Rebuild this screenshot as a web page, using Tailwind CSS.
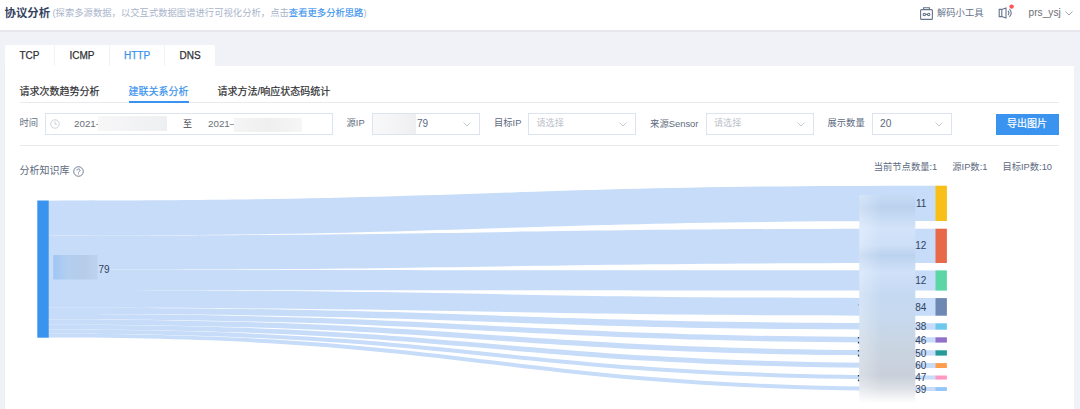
<!DOCTYPE html>
<html lang="zh-CN">
<head>
<meta charset="utf-8">
<title>协议分析</title>
<script src="https://cdn.jsdelivr.net/npm/@tailwindcss/browser@4"></script>
</head>
<body class="w-[1080px] h-[409px] overflow-hidden bg-[#f1f2f7] font-['Liberation_Sans','Noto_Sans_CJK_SC',sans-serif] text-[9.3px] leading-none text-[#5d6a80] flex flex-col whitespace-nowrap">
<header class="h-[32px] shrink-0 bg-white border-b-2 border-[#e6e8ed] flex items-center pl-[4.5px] pr-[7px] pb-[3px]">
  <h1 class="text-[11.4px] font-bold text-[#33435f] w-[48px]">协议分析</h1>
  <p class="text-[9.33px] text-[#a9b4cb] pt-px">(探索多源数据，以交互式数据图谱进行可视化分析，点击<a class="text-[#3a93ee] [-webkit-text-stroke:0.15px]">查看更多分析思路</a>)</p>
  <div class="ml-auto flex items-center">
    <svg class="w-[13px] h-[13px]" viewBox="0 0 13 13" fill="none" stroke="#66738c" stroke-width="1.1"><rect x=".6" y="2.6" width="11.8" height="9.8" rx="1"/><path d="M3.6 2.4V.7h5.8v1.7M5.6 7.4h1.8"/><circle cx="4.3" cy="7.4" r="1.2"/><circle cx="8.7" cy="7.4" r="1.2"/></svg>
    <span class="ml-[4px] w-[46px] text-[9.3px] text-[#66738c] pt-px">解码小工具</span>
    <svg class="ml-[15px] w-[16px] h-[17px] -mt-[3px]" viewBox="0 0 16 17" fill="none" stroke="#66738c" stroke-width="1.1"><path d="M3.8 5.4H1.2v7.2h2.6M3.8 5.4v7.2M3.8 5.4 8 4v10l-4.2-1.4M10 7c1.2 1.1 1.2 3 0 4.1M11.4 5.2c2.4 2.1 2.4 5.6 0 7.7"/><circle cx="13.6" cy="2.6" r="2.2" fill="#fb5358" stroke="none"/></svg>
    <span class="ml-[14.5px] w-[32.5px] text-[10.2px] text-[#6c6f75]">prs_ysj</span>
    <svg class="ml-[4px] w-[8px] h-[5px]" viewBox="0 0 8 5" fill="none" stroke="#9a9da5" stroke-width=".9"><path d="M.5.5 4 4 7.5.5"/></svg>
  </div>
</header>
<main class="pl-[5px] pr-[6.5px] pt-[13px] flex-1 flex flex-col min-h-0">
  <nav class="flex h-[21px] gap-px text-[10px] text-[#303133] text-center leading-[22px] [-webkit-text-stroke:0.25px]">
    <a class="w-[49px] bg-white rounded-tl-[2px]">TCP</a>
    <a class="w-[54px] bg-white">ICMP</a>
    <a class="w-[54px] bg-white text-[#3a93ee]">HTTP</a>
    <a class="w-[50px] bg-white rounded-tr-[2px]">DNS</a>
  </nav>
  <section class="bg-white flex-1 flex flex-col pl-[14.5px] pr-[15px] min-h-0 border-l border-[#eceef3] -ml-px">
    <div class="flex h-[37px] shrink-0 items-end border-b border-[#e8eaee] text-[10px] text-[#303133] [-webkit-text-stroke:0.2px]">
      <a class="w-[80px] mr-[29px] pb-[5px]">请求次数趋势分析</a>
      <a class="w-[60px] mr-[29px] pb-[3px] border-b-2 border-[#3a93ee] text-[#3a93ee] -mb-px h-[16px] box-border">建联关系分析</a>
      <a class="pb-[5px]">请求方法/响应状态码统计</a>
    </div>
    <div class="flex h-[43px] shrink-0 items-center border-b border-[#e8eaee]">
      <span class="w-[25px]">时间</span>
      <div class="w-[288px] h-[22px] border border-[#dbe4f0] flex items-center text-[9.8px] text-[#6b6e75]">
        <svg class="ml-[4px] w-[10px] h-[10px]" viewBox="0 0 10 10" fill="none" stroke="#c3c6cd" stroke-width=".8"><circle cx="5" cy="5" r="4.2"/><path d="M5 2.4v3h2"/></svg>
        <span class="ml-[14.5px] w-[24px]">2021-</span><i class="w-[69px] h-[15px] -mt-px bg-gradient-to-r from-[#f7f7f8] to-[#eeeff1]"></i>
        <span class="ml-[16px] w-[25px] text-[9px] text-[#404348]">至</span>
        <span class="w-[26px]">2021–</span><i class="w-[68px] h-[14px] mt-[2px] bg-gradient-to-r from-[#f5f5f6] via-[#efeff0] to-[#f6f6f7]"></i>
      </div>
      <span class="ml-[14px] w-[25.5px]">源IP</span>
      <div class="w-[107.5px] h-[22px] border border-[#dbe4f0] flex items-center pr-[8px] text-[10px]">
        <i class="w-[43px] h-[20px] bg-gradient-to-r from-[#f9f9fa] to-[#efeff1]"></i><span class="ml-px">79</span>
        <svg class="ml-auto w-[8px] h-[5px]" viewBox="0 0 8 5" fill="none" stroke="#bfc4cd" stroke-width=".9"><path d="M.5.5 4 4 7.5.5"/></svg>
      </div>
      <span class="ml-[14.5px] w-[34px]">目标IP</span>
      <div class="w-[108px] h-[22px] border border-[#dbe4f0] flex items-center pl-[7.5px] pr-[8px] text-[9.1px] text-[#bcc1cb]">请选择
        <svg class="ml-auto w-[8px] h-[5px]" viewBox="0 0 8 5" fill="none" stroke="#bfc4cd" stroke-width=".9"><path d="M.5.5 4 4 7.5.5"/></svg>
      </div>
      <span class="ml-[14px] w-[55.5px] text-[9.4px]">来源Sensor</span>
      <div class="w-[108px] h-[22px] border border-[#dbe4f0] flex items-center pl-[7.5px] pr-[8px] text-[9.1px] text-[#bcc1cb]">请选择
        <svg class="ml-auto w-[8px] h-[5px]" viewBox="0 0 8 5" fill="none" stroke="#bfc4cd" stroke-width=".9"><path d="M.5.5 4 4 7.5.5"/></svg>
      </div>
      <span class="ml-[14px] w-[44.5px]">展示数量</span>
      <div class="w-[80px] h-[22px] border border-[#dbe4f0] flex items-center pl-[7px] pr-[8px] text-[10.2px]">20
        <svg class="ml-auto w-[8px] h-[5px]" viewBox="0 0 8 5" fill="none" stroke="#bfc4cd" stroke-width=".9"><path d="M.5.5 4 4 7.5.5"/></svg>
      </div>
      <button class="ml-auto w-[63px] h-[21px] bg-[#3a93ee] text-white text-[10px] [-webkit-text-stroke:0.2px]">导出图片</button>
    </div>
    <div class="flex h-[34px] shrink-0">
      <div class="flex items-center text-[10px] h-[20px] mt-[15px]">分析知识库
        <svg class="ml-[3px] w-[11px] h-[11px]" viewBox="0 0 11 11" fill="none" stroke="#66738c" stroke-width=".9"><circle cx="5.5" cy="5.5" r="4.8"/><path d="M3.9 4.5c0-2.1 3.2-2 3.2-.2 0 1.2-1.6 1.1-1.6 2.3M5.5 7.5v.9"/></svg>
      </div>
      <div class="ml-auto mr-[6.5px] flex gap-[15px] mt-[17px]"><span>当前节点数量:1</span><span>源IP数:1</span><span>目标IP数:10</span></div>
    </div>
    <svg class="-ml-[19.5px] w-[1080px] h-[229px] shrink-0 overflow-hidden" viewBox="0 180 1080 229">
      <defs>
        <linearGradient id="targetMask" x1="0" y1="0" x2="0" y2="1">
          <stop offset="0" stop-color="#c5dbf6"/><stop offset=".06" stop-color="#bbd2ee"/><stop offset=".16" stop-color="#d2e3fa"/><stop offset=".24" stop-color="#cddff7"/><stop offset=".29" stop-color="#bbd2ee"/><stop offset=".37" stop-color="#d0e1f9"/><stop offset=".48" stop-color="#c5d9f2"/><stop offset=".58" stop-color="#c6d9ef"/><stop offset=".72" stop-color="#c9d5e2"/><stop offset=".87" stop-color="#c9d0da"/><stop offset=".93" stop-color="#dde1e7"/><stop offset="1" stop-color="#ffffff"/>
        </linearGradient>
        <linearGradient id="edgeLight"><stop offset="0" stop-color="#ffffff" stop-opacity=".3"/><stop offset=".4" stop-color="#ffffff" stop-opacity="0"/></linearGradient>
        <linearGradient id="sourceMask"><stop offset="0" stop-color="#9fc6f4"/><stop offset=".3" stop-color="#b2cef0"/><stop offset=".7" stop-color="#b6cce9"/><stop offset="1" stop-color="#bdd3f0"/></linearGradient>
      </defs>
      <g fill="#c6dcf9">
        <path d="M48 200.7C492 200.7 492 185.7 936 185.7V221C492 221 492 235.7 48 235.7Z"/>
        <path d="M48 235.7C492 235.7 492 228.7 936 228.7V263C492 263 492 269.9 48 269.9Z"/>
        <path d="M48 269.9C492 269.9 492 270.4 936 270.4V290.6C492 290.6 492 290.1 48 290.1Z"/>
        <path d="M48 290.1C492 290.1 492 298.1 936 298.1V315.7C492 315.7 492 307.7 48 307.7Z"/>
        <path d="M48 307.7C492 307.7 492 323.3 936 323.3V329.7C492 329.7 492 314.1 48 314.1Z"/>
        <path d="M48 314.1C492 314.1 492 337.3 936 337.3V342.6C492 342.6 492 319.4 48 319.4Z"/>
        <path d="M48 319.4C492 319.4 492 350.3 936 350.3V355.6C492 355.6 492 324.7 48 324.7Z"/>
        <path d="M48 324.7C492 324.7 492 363.1 936 363.1V368C492 368 492 329.6 48 329.6Z"/>
        <path d="M48 329.6C492 329.6 492 375.5 936 375.5V379.6C492 379.6 492 333.7 48 333.7Z"/>
        <path d="M48 333.7C492 333.7 492 387.1 936 387.1V391C492 391 492 337.6 48 337.6Z"/>
      </g>
      <rect x="37.3" y="200.5" width="11.4" height="137.2" fill="#3a93ee"/>
      <rect x="935.5" y="185.7" width="11.4" height="35.3" fill="#f8bf18"/>
      <rect x="935.5" y="228.7" width="11.4" height="34.3" fill="#e8684a"/>
      <rect x="935.5" y="270.4" width="11.4" height="20.2" fill="#5bd6a4"/>
      <rect x="935.5" y="298.1" width="11.4" height="17.6" fill="#6e88b4"/>
      <rect x="935.5" y="323.3" width="11.4" height="6.4" fill="#6dc8ec"/>
      <rect x="935.5" y="337.3" width="11.4" height="5.3" fill="#9270ca"/>
      <rect x="935.5" y="350.3" width="11.4" height="5.3" fill="#269a99"/>
      <rect x="935.5" y="363.1" width="11.4" height="4.9" fill="#ff9d4d"/>
      <rect x="935.5" y="375.5" width="11.4" height="4.1" fill="#ff99c3"/>
      <rect x="935.5" y="387.1" width="11.4" height="3.9" fill="#95c6f9"/>
      <g fill="#2c3a50"><path d="M858 304h1.3v1.4H858Z" opacity=".25"/><path d="M857.9 337h1.6v1.4h-1.6ZM857.9 341.8h1.6v1.6h-1.6ZM857.9 350h1.6v1.4h-1.6ZM857.9 354.8h1.6v1.6h-1.6ZM857.9 375h1.6v1.4h-1.6ZM857.9 379.6h1.6v1.6h-1.6Z"/></g>
      <rect x="859.3" y="195" width="56" height="208" fill="url(#targetMask)"/>
      <rect x="859.3" y="195" width="56" height="208" fill="url(#edgeLight)"/>
      <rect x="53.3" y="255" width="44.3" height="24.5" fill="url(#sourceMask)"/>
      <g font-size="10" fill="#33435c">
        <text x="98.5" y="272.8">79</text>
        <g text-anchor="end">
          <text x="926.4" y="206.9">11</text><text x="926.4" y="249.3">12</text><text x="926.4" y="284">12</text><text x="926.4" y="310.5">84</text><text x="926.4" y="330.2">38</text><text x="926.4" y="343.6">46</text><text x="926.4" y="356.5">50</text><text x="926.4" y="369.2">60</text><text x="926.4" y="381.2">47</text><text x="926.4" y="392.7">39</text>
        </g>
      </g>
    </svg>
  </section>
</main>
</body>
</html>
